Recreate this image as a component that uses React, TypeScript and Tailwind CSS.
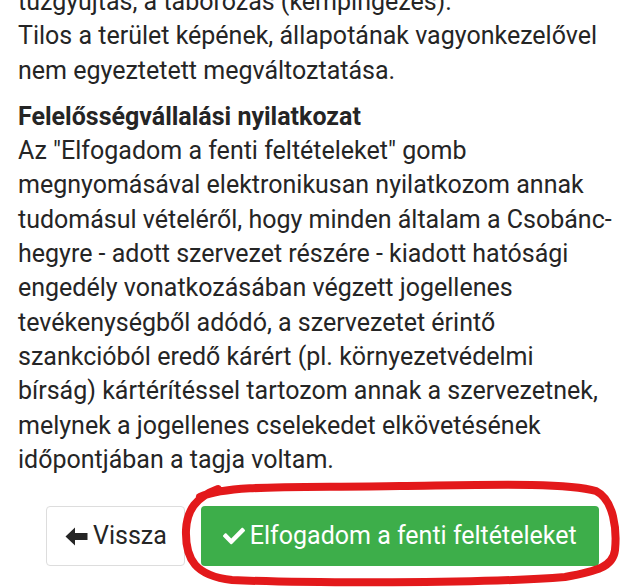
import { FaCheck } from "react-icons/fa";

function ArrowLeft() {
  return (
    <svg width="23" height="19" viewBox="0 0 23 19" className="shrink-0">
      <path d="M0.5 9.5 L10 0.5 L10 6 L22.5 6 L22.5 13 L10 13 L10 18.5 Z" fill="currentColor" strokeLinejoin="round" />
    </svg>
  );
}

export default function App() {
  return (
    <div className="relative w-[637px] h-[588px] overflow-hidden bg-white text-[#252525] font-['Roboto',sans-serif] text-[25px] leading-[34.3px]">
      <div className="px-[18px]">
        <p className="mt-[-15px] mb-[12px]">
          tűzgyújtás, a táborozás (kempingezés).
          <br />
          Tilos a terület képének, állapotának vagyonkezelővel
          <br />
          nem egyeztetett megváltoztatása.
        </p>
        <p className="font-bold">Felelősségvállalási nyilatkozat</p>
        <p>
          Az "Elfogadom a fenti feltételeket" gomb
          <br />
          megnyomásával elektronikusan nyilatkozom annak
          <br />
          tudomásul vételéről, hogy minden általam a Csobánc-
          <br />
          hegyre - adott szervezet részére - kiadott hatósági
          <br />
          engedély vonatkozásában végzett jogellenes
          <br />
          tevékenységből adódó, a szervezetet érintő
          <br />
          szankcióból eredő kárért (pl. környezetvédelmi
          <br />
          bírság) kártérítéssel tartozom annak a szervezetnek,
          <br />
          melynek a jogellenes cselekedet elkövetésének
          <br />
          időpontjában a tagja voltam.
        </p>
        <div className="mt-[29px] flex gap-4 pl-[28px]">
          <button className="flex items-center gap-[5px] rounded-[4px] border border-[#ddd] bg-white pl-[18px] pr-[17px] py-[12px] text-[#252525]">
            <ArrowLeft />
            <span>Vissza</span>
          </button>
          <button className="flex items-center gap-[5px] rounded-[4px] bg-[#3dae4a] px-[22px] py-[12px] text-white">
            <FaCheck className="h-[22px] w-[22px]" />
            <span>Elfogadom a fenti feltételeket</span>
          </button>
        </div>
      </div>
      <svg
        className="pointer-events-none absolute left-0 top-0"
        width="637"
        height="588"
        viewBox="0 0 637 588"
      >
        <path
          d="M200 497 C230 484, 300 488, 400 486 C480 485, 565 482, 596 491 C614 500, 617 530, 615 550 C613 567, 597 571, 565 577 C480 584, 300 583, 232 580 C196 576, 185 560, 186 530 C187 510, 196 497, 218 489"
          fill="none"
          stroke="#e3191b"
          strokeWidth="8"
          strokeLinecap="round"
          strokeLinejoin="round"
        />
      </svg>
    </div>
  );
}
